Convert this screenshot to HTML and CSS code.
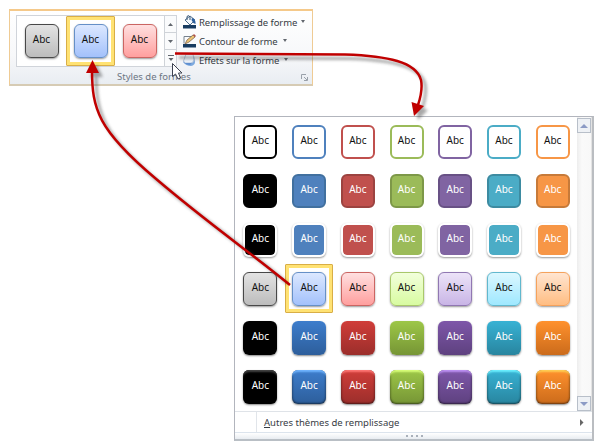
FILE: index.html
```html
<!DOCTYPE html>
<html lang="fr">
<head>
<meta charset="utf-8">
<title>Styles de formes</title>
<link rel="stylesheet" href="styles.css">
</head>
<body>
<section class="ribbon">
  <div class="ribbon-main">
    <div class="gallery">
      <div class="preview subtle">
        <div class="cell c1"><span class="tile">Abc</span></div>
        <div class="cell c2 selected"><span class="tile">Abc</span></div>
        <div class="cell c3"><span class="tile">Abc</span></div>
      </div>
      <div class="spin">
        <span><svg width="5" height="3"><path d="M0 3L2.5 0L5 3z"/></svg></span>
        <span><svg width="5" height="3"><path d="M0 0L2.5 3L5 0z"/></svg></span>
        <span><svg width="6" height="6"><path d="M0 0h6v1H0zM.5 3L3 6L5.500 3z"/></svg></span>
      </div>
    </div>
    <div class="commands">
      <div class="command">
        <svg width="15" height="14"><path d="M3 5L8 1l5 4-5 5z" fill="#f5f9fd" stroke="#52708e"/><path d="M5 5V1.500Q6.500-.5 8 2v3" fill="none" stroke="#355474"/><path d="M10 3q4 1 3.500 6-3-1-4-4z" fill="#2d5f9c"/><path d="M1 10h13v3.500H1z" fill="#173b60"/></svg>
        <span class="label l1">Remplissage de forme</span><i class="drop"></i>
      </div>
      <div class="command">
        <svg width="15" height="14"><path d="M2 9.500V2.500h9" fill="none" stroke="#77828e"/><path d="M3 10L5 6 11 1l2 2-6 5z" fill="#edc472" stroke="#7d6754" stroke-width=".8"/><path d="M11 1l2 2 1-1-2-2z" fill="#b34f48"/><path d="M1 10h13v3.500H1z" fill="#173b60"/></svg>
        <span class="label l2">Contour de forme</span><i class="drop"></i>
      </div>
      <div class="command">
        <svg width="15" height="14"><path d="M1 9q3 4 8 4 4-1 4-4l-1-6z" fill="#7da9df"/><path d="M4 1h7l1 6q-1 3-3 3H3L1.500 8z" fill="#eef4fb" stroke="#b4c5dc"/><path d="M1 8q2 4 7 4l2-2H3z" fill="#5f8fd0"/></svg>
        <span class="label l3">Effets sur la forme</span><i class="drop"></i>
      </div>
    </div>
  </div>
  <footer class="ribbon-title"><span>Styles de formes</span>
    <svg class="launcher" width="7" height="7"><path d="M.5 5V.5H5M3 3l3 3M6.500 3v3.500H3" fill="none" stroke="#9aa1aa"/></svg>
  </footer>
</section>

<section class="menu">
  <div class="styles-area">
    <div class="styles">
      <div class="row outline"><div class="cell c1"><span class="tile">Abc</span></div><div class="cell c2"><span class="tile">Abc</span></div><div class="cell c3"><span class="tile">Abc</span></div><div class="cell c4"><span class="tile">Abc</span></div><div class="cell c5"><span class="tile">Abc</span></div><div class="cell c6"><span class="tile">Abc</span></div><div class="cell c7"><span class="tile">Abc</span></div></div>
      <div class="row solid"><div class="cell c1"><span class="tile">Abc</span></div><div class="cell c2"><span class="tile">Abc</span></div><div class="cell c3"><span class="tile">Abc</span></div><div class="cell c4"><span class="tile">Abc</span></div><div class="cell c5"><span class="tile">Abc</span></div><div class="cell c6"><span class="tile">Abc</span></div><div class="cell c7"><span class="tile">Abc</span></div></div>
      <div class="row framed"><div class="cell c1"><span class="tile">Abc</span></div><div class="cell c2"><span class="tile">Abc</span></div><div class="cell c3"><span class="tile">Abc</span></div><div class="cell c4"><span class="tile">Abc</span></div><div class="cell c5"><span class="tile">Abc</span></div><div class="cell c6"><span class="tile">Abc</span></div><div class="cell c7"><span class="tile">Abc</span></div></div>
      <div class="row subtle"><div class="cell c1"><span class="tile">Abc</span></div><div class="cell c2 selected"><span class="tile">Abc</span></div><div class="cell c3"><span class="tile">Abc</span></div><div class="cell c4"><span class="tile">Abc</span></div><div class="cell c5"><span class="tile">Abc</span></div><div class="cell c6"><span class="tile">Abc</span></div><div class="cell c7"><span class="tile">Abc</span></div></div>
      <div class="row moderate"><div class="cell c1"><span class="tile">Abc</span></div><div class="cell c2"><span class="tile">Abc</span></div><div class="cell c3"><span class="tile">Abc</span></div><div class="cell c4"><span class="tile">Abc</span></div><div class="cell c5"><span class="tile">Abc</span></div><div class="cell c6"><span class="tile">Abc</span></div><div class="cell c7"><span class="tile">Abc</span></div></div>
      <div class="row intense"><div class="cell c1"><span class="tile">Abc</span></div><div class="cell c2"><span class="tile">Abc</span></div><div class="cell c3"><span class="tile">Abc</span></div><div class="cell c4"><span class="tile">Abc</span></div><div class="cell c5"><span class="tile">Abc</span></div><div class="cell c6"><span class="tile">Abc</span></div><div class="cell c7"><span class="tile">Abc</span></div></div>
    </div>
    <div class="scrollbar">
      <span><svg width="8" height="4"><path d="M0 4L4 0L8 4z"/></svg></span>
      <span><svg width="8" height="4"><path d="M0 0L4 4L8 0z"/></svg></span>
    </div>
  </div>
  <div class="more">
    <span class="more-label"><u>A</u>utres thèmes de remplissage</span>
    <svg width="4" height="7"><path d="M0 0L3.500 3.500L0 7z" fill="#666"/></svg>
  </div>
  <div class="grip"><i></i><i></i><i></i><i></i></div>
</section>

<svg class="arrows" width="599" height="445">
  <defs><filter id="soft" x="-10%" y="-10%" width="120%" height="120%"><feGaussianBlur stdDeviation="1.500"/></filter></defs>
  <g filter="url(#soft)" transform="translate(4 4)" opacity=".42">
    <path d="M284 280C250 250 210 224 155 178C98 130 92 109 92 70" fill="none" stroke="#333" stroke-width="3"/>
    <path d="M92.500 60L99 73H86z" fill="#333"/>
    <path d="M175 53.500L345 54.500C388 56 416 62 421 80Q423 90 418 105" fill="none" stroke="#333" stroke-width="3"/>
    <path d="M414 116L411.500 102L424 106z" fill="#333"/>
  </g>
  <path d="M290 285C250 252 210 225 155 178C98 130 92 109 92 70" fill="none" stroke="#c00000" stroke-width="2.500"/>
  <path d="M92.500 60L99 73H86z" fill="#c00000"/>
  <path d="M175 53.500L345 54.500C388 56 416 62 421 80Q423 90 418 105" fill="none" stroke="#c00000" stroke-width="2.500"/>
  <path d="M414 116L411.500 102L424 106z" fill="#c00000"/>
  <path d="M172.500 63.500V76.500L175.500 74L178 79L180.500 78L178.500 73H182z" fill="#fff" stroke="#3c4250"/>
</svg>
</body>
</html>
```
FILE: styles.css
```css
* { box-sizing: border-box; }
body { margin: 0; padding: 9px 0 0 9px; width: 599px; height: 445px; overflow: hidden; background: #fff; font: 10px/14px "Noto Sans", "Open Sans", sans-serif; color: #414750; position: relative; }
svg { display: block; flex: none; }

.ribbon { width: 304px; height: 77px; border: 1px solid #efcb94; border-top: 2px solid #f5c98a; border-bottom: 2px solid #d6cbb4; background: linear-gradient(#fff, #f7f8fa 60%, #e9edf2); display: flex; flex-direction: column; }
.ribbon-main { display: flex; padding: 4px 0 0 6px; }
.gallery { display: flex; width: 161px; height: 52px; border: 1px solid #d0d4da; background: #fff; }
.preview { display: flex; width: 147px; }
.spin { width: 12px; border-left: 1px solid #cfd3d8; display: flex; flex-direction: column; }
.spin span { flex: 1; display: flex; align-items: center; justify-content: center; background: #fafbfc; }
.spin span + span { border-top: 1px solid #cfd3d8; }
.spin path { fill: #62676e; }
.commands { padding-left: 5px; margin-top: -3px; }
.command { display: flex; align-items: center; height: 19px; }
.label { margin-left: 2px; padding-top: 2px; white-space: nowrap; color: #363b44; font-size: 9.5px; letter-spacing: -.08px; }
.l1 { width: 98px; }
.l2 { width: 80px; }
.l3 { width: 81px; }
.drop { margin-left: 4px; border: 2.5px solid transparent; border-top: 3px solid #62676e; border-bottom: 0; }
.ribbon-title { flex: 1; display: flex; align-items: center; color: #6c7683; padding-left: 107px; font-size: 9.5px; }
.ribbon-title span { width: 74px; padding-top: 1px; white-space: nowrap; }
.launcher { margin-left: 110px; margin-top: 2px; }

.cell { width: 49px; height: 49px; display: flex; align-items: center; justify-content: center; }
.preview .cell { height: 50px; }
.selected { border: 1px solid #d9ae46; border-radius: 1px; box-shadow: inset 0 0 0 3px #ffe273; }
.tile { width: 34px; height: 34px; border-radius: 6px; display: block; text-align: center; padding-top: 8px; color: #fff; flex: none; }
.c1 { --base: #000; --edge: #000; --light: #e3e3e3; --mid: #bcbcbc; --line: #484848; --hi: #000; --lo: #000; --shine: #444; }
.c2 { --base: #4f81bd; --edge: #41709f; --light: #dce8ff; --mid: #a3c1fb; --line: #6690c7; --hi: #3d7dcc; --lo: #2d5e9b; --shine: #70b5ff; }
.c3 { --base: #c0504d; --edge: #9c4340; --light: #ffe0e0; --mid: #ff9f9e; --line: #cb6562; --hi: #d03d39; --lo: #9b2e2b; --shine: #ff7774; }
.c4 { --base: #9bbb59; --edge: #7d9848; --light: #f2ffdb; --mid: #d8fba1; --line: #a9c86b; --hi: #9dc748; --lo: #769535; --shine: #d9ff79; }
.c5 { --base: #8064a2; --edge: #685185; --light: #ece3f8; --mid: #c9b5e6; --line: #9077b2; --hi: #7e57a9; --lo: #5e417f; --shine: #be91f4; }
.c6 { --base: #4bacc6; --edge: #3d8ba1; --light: #dbf7ff; --mid: #9fe8ff; --line: #61b8ce; --hi: #38b2d4; --lo: #28859f; --shine: #6bf0ff; }
.c7 { --base: #f79646; --edge: #c77a39; --light: #ffe5d1; --mid: #ffbd82; --line: #f5a25c; --hi: #ff912d; --lo: #cb6b1b; --shine: #ffcf54; }
.outline .tile { border: 2px solid var(--base); background: #fff; color: #111; padding-top: 6px; }
.solid .tile { background: var(--base); border: 2px solid var(--edge); padding-top: 6px; }
.framed .tile { background: var(--base); border: 2px solid #fff; background-clip: padding-box; padding-top: 6px; box-shadow: 0 1px 2px #999; }
.subtle .tile { background: linear-gradient(var(--light), var(--mid)); border: 1px solid var(--line); padding-top: 7px; color: #111; box-shadow: 0 1px 2px #999; }
.preview .tile { padding-top: 7px; }
.moderate .tile { background: linear-gradient(var(--hi), var(--lo)); box-shadow: 0 1px 2px #888; }
.intense .tile { background: linear-gradient(var(--hi), var(--lo)); box-shadow: inset 0 3px 2px -1px var(--shine), inset 0 -1px 2px #0006, inset 1px 0 2px #0003, inset -1px 0 2px #0003, 0 1px 2px #888; }

.menu { width: 360px; height: 325px; margin: 30px 0 0 225px; border: 1px solid #b2b5bd; border-right: 2px solid #babdc1; border-bottom: 2px solid #b9bfc5; background: #fff; }
.styles-area { height: 295px; display: flex; justify-content: space-between; border-bottom: 1px solid #dfe3e8; }
.styles { padding: 0 0 0 1px; width: 342px; }
.row { display: flex; }
.scrollbar { width: 15px; margin-right: 1px; background: linear-gradient(90deg, #ededed, #fafafa 35%, #f8f8f8); border-right: 1px solid #e3e3e3; display: flex; flex-direction: column; justify-content: space-between; padding-top: 1px; }
.scrollbar span { width: 14px; height: 15px; border: 1px solid #b8bfc9; background: #eef1f5; display: flex; align-items: center; justify-content: center; }
.scrollbar path { fill: #8c9bc5; }
.more { height: 20px; margin-left: 21px; padding: 0 8px 0 7px; border-left: 1px solid #e1e5ea; display: flex; align-items: center; justify-content: space-between; color: #363b44; font-size: 9.5px; }
.more-label { padding-top: 1px; white-space: nowrap; }
.more u { text-underline-offset: 1px; }
.grip { height: 7px; border-top: 1px solid #dce4ed; background: linear-gradient(#fff, #e8ecf1); display: flex; justify-content: center; gap: 3px; padding: 2px 0 0 1px; }
.grip i { width: 2px; height: 2px; background: #a9b0ba; }
.arrows { position: absolute; left: 0; top: 0; pointer-events: none; }
```
